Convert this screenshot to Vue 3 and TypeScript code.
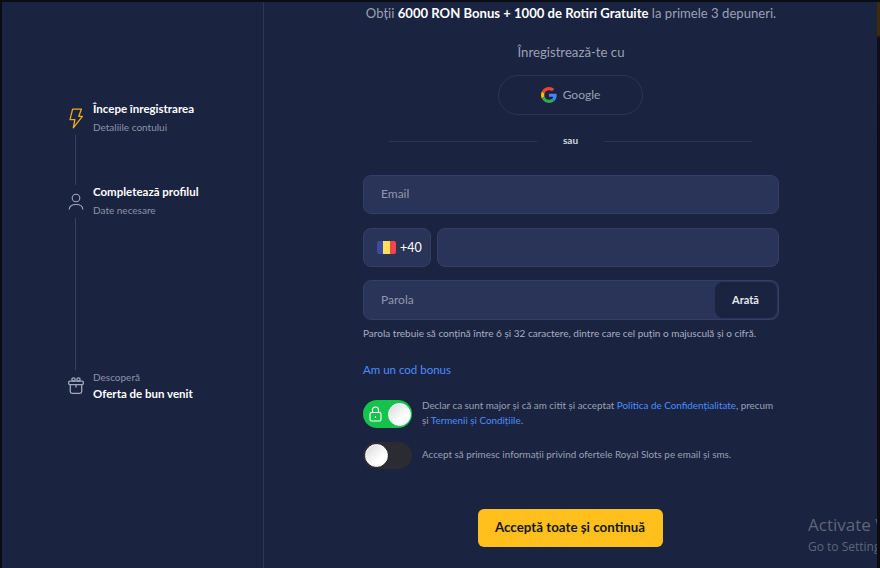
<script setup lang="ts">
type Step = { title: string; sub: string; icon: string; reverse?: boolean }

const steps: Step[] = [
  { title: 'Începe înregistrarea', sub: 'Detaliile contului', icon: 'bolt' },
  { title: 'Completează profilul', sub: 'Date necesare', icon: 'user' },
  { title: 'Oferta de bun venit', sub: 'Descoperă', icon: 'gift', reverse: true },
]
</script>

<template>
  <div class="page">
    <aside class="side">
      <div class="steps">
        <template v-for="(step, i) in steps" :key="step.title">
          <div class="step" :class="{ reverse: step.reverse }">
            <div class="step-icon">
              <svg v-if="step.icon === 'bolt'" width="14" height="21" viewBox="0 0 14 21" fill="none" stroke="#eead1c" stroke-width="1.3" stroke-linejoin="round">
                <path d="M3.600 1.200h8.800L9.800 8.300h3.600L4.300 19.800l1.600-8.200H1z" />
              </svg>
              <svg v-else-if="step.icon === 'user'" width="16" height="17" viewBox="0 0 16 17" fill="none" stroke="#a3a9bb" stroke-width="1.100">
                <circle cx="8" cy="5" r="3.800" />
                <path d="M1.200 16.500c0-3.500 2.800-5 6.800-5s6.800 1.500 6.800 5" />
              </svg>
              <svg v-else width="16" height="17" viewBox="0 0 16 17" fill="none" stroke="#a3a9bb" stroke-width="1.300">
                <circle cx="5.500" cy="2.400" r="1.600" />
                <circle cx="10.500" cy="2.400" r="1.600" />
                <rect x=".7" y="4.100" width="14.600" height="3.500" rx="1" />
                <path d="M2.300 7.600v7c0 1 .6 1.700 1.700 1.700h8c1.100 0 1.700-.7 1.700-1.700v-7M8 7.600v3" />
              </svg>
            </div>
            <div class="step-text">
              <div class="step-title">{{ step.title }}</div>
              <div class="step-sub">{{ step.sub }}</div>
            </div>
          </div>
          <div v-if="i < steps.length - 1" class="step-line" :class="i === 0 ? 'short' : 'long'"></div>
        </template>
      </div>
    </aside>

    <main class="main">
      <div class="form">
        <p class="promo">Obții <b>6000 RON Bonus + 1000 de Rotiri Gratuite</b> la primele 3 depuneri.</p>
        <p class="register">Înregistrează-te cu</p>
        <button class="google">
          <svg width="16" height="16" viewBox="0 0 48 48">
            <path fill="#ea4335" d="M24 9.500c3.500 0 6.700 1.200 9.200 3.600l6.900-6.900C35.900 2.400 30.500 0 24 0 14.600 0 6.500 5.400 2.600 13.200l8 6.200C12.500 13.600 17.800 9.500 24 9.500z" />
            <path fill="#4285f4" d="M47 24.500c0-1.600-.1-3.100-.4-4.500H24v9h12.900c-.6 3-2.300 5.500-4.800 7.200l7.700 6C44.300 38 47 31.800 47 24.500z" />
            <path fill="#fbbc05" d="M10.600 28.600c-.5-1.400-.8-3-.8-4.600s.3-3.200.8-4.600l-8-6.200C1 16.400 0 20.100 0 24s1 7.600 2.600 10.800z" />
            <path fill="#34a853" d="M24 48c6.500 0 11.900-2.100 15.800-5.800l-7.700-6c-2.100 1.400-4.900 2.300-8.100 2.300-6.200 0-11.500-4.100-13.400-9.900l-8 6.200C6.500 42.600 14.600 48 24 48z" />
          </svg>
          <span>Google</span>
        </button>
        <div class="divider"><span>sau</span></div>

        <div class="field email"><span>Email</span></div>
        <div class="phone">
          <div class="field prefix">
            <span class="flag"><i class="blue"></i><i class="yellow"></i><i class="red"></i></span>
            <span>+40</span>
          </div>
          <div class="field number"></div>
        </div>
        <div class="field password">
          <span>Parola</span>
          <button class="show">Arată</button>
        </div>
        <p class="hint">Parola trebuie să conțină între 6 și 32 caractere, dintre care cel puțin o majusculă și o cifră.</p>
        <a class="bonus">Am un cod bonus</a>

        <div class="consent first">
          <div class="toggle on">
            <svg width="13" height="16" viewBox="0 0 13 16" fill="none" stroke="#fff" stroke-width="1.100">
              <rect x="1" y="6.500" width="11" height="8.500" rx="1.500" />
              <path d="M3.500 6.500V4a3 3 0 0 1 6 0v2.500" />
              <path d="M6.500 10v2" />
            </svg>
            <span class="knob"></span>
          </div>
          <p>Declar ca sunt major și că am citit și acceptat <a>Politica de Confidențialitate</a>, precum și <a>Termenii și Condițiile</a>.</p>
        </div>
        <div class="consent second">
          <div class="toggle">
            <span class="knob"></span>
          </div>
          <p>Accept să primesc informații privind ofertele Royal Slots pe email și sms.</p>
        </div>

        <button class="submit">Acceptă toate și continuă</button>
      </div>
    </main>

    <div class="activate">
      <div class="a1">Activate Windows</div>
      <div class="a2">Go to Settings to activate Windows.</div>
    </div>
    <div class="edge"></div>
  </div>
</template>

<style>
html,
body {
  margin: 0;
  background: #1a2340;
  overflow: hidden;
}
</style>

<style scoped>
.page {
  position: relative;
  display: flex;
  width: 880px;
  height: 568px;
  box-sizing: border-box;
  overflow: hidden;
  background: #1a2340;
  border-top: 2px solid #0b0d14;
  border-left: 2px solid #0b0d14;
  font-family: Lato, "Open Sans", sans-serif;
  color: #fff;
}
.side {
  width: 262px;
  flex: none;
  box-sizing: border-box;
  border-right: 1px solid #2c3553;
  padding: 100px 0 0 65px;
}
.steps {
  display: flex;
  flex-direction: column;
}
.step {
  display: flex;
  align-items: center;
  gap: 8px;
  height: 33px;
}
.step-icon {
  width: 18px;
  display: flex;
  justify-content: center;
}
.step-text {
  display: flex;
  flex-direction: column;
  gap: 3.500px;
  margin-top: -2px;
}
.step.reverse .step-text {
  flex-direction: column-reverse;
  gap: 2px;
  margin-top: 0;
}
.step.reverse .step-icon {
  margin-top: -2px;
}
.step-title {
  font-size: 11.500px;
  font-weight: 700;
  line-height: 16px;
  white-space: nowrap;
}
.step-sub {
  font-size: 10px;
  line-height: 13px;
  color: #8d93a8;
}
.step-line {
  width: 1px;
  margin-left: 8px;
  background: #3a4260;
}
.step-line.short {
  height: 50px;
}
.step-line.long {
  height: 152px;
}
.main {
  flex: 1;
  padding-left: 99px;
}
.form {
  width: 416px;
  display: flex;
  flex-direction: column;
}
p {
  margin: 0;
}
.promo {
  margin-top: 2px;
  text-align: center;
  font-size: 13.100px;
  line-height: 18px;
  color: #9ba1b5;
  white-space: nowrap;
}
.promo b {
  color: #fff;
}
.register {
  margin-top: 21px;
  text-align: center;
  font-size: 13.200px;
  line-height: 18px;
  color: #9ba1b5;
}
.google {
  align-self: center;
  margin: 14px 1px 0 0;
  width: 145px;
  height: 40px;
  display: flex;
  align-items: center;
  justify-content: center;
  gap: 6px;
  border: 1px solid #2c3553;
  border-radius: 20px;
  background: transparent;
  color: #9ba1b5;
  font: 12px Lato, sans-serif;
  padding: 0;
}
.google span {
  margin-top: -2px;
}
.divider {
  display: flex;
  align-items: center;
  margin: 19px 27px 0 26px;
  height: 14px;
  font-size: 10px;
  font-weight: 700;
  color: #d4d7e0;
}
.divider::before,
.divider::after {
  content: "";
  flex: 1;
  height: 1px;
  background: #2c3553;
}
.divider span {
  padding: 0 26px;
  margin-top: -2px;
}
.field {
  box-sizing: border-box;
  height: 39px;
  display: flex;
  align-items: center;
  padding-left: 17px;
  background: #2a3458;
  border: 1px solid #363f63;
  border-radius: 8px;
  font-size: 12px;
  color: #9197ac;
}
.email {
  margin-top: 27px;
}
.email span,
.password > span {
  margin-top: -2px;
}
.phone {
  display: flex;
  gap: 6px;
  margin-top: 14px;
}
.prefix {
  width: 68px;
  flex: none;
  gap: 4px;
  padding-left: 13px;
  font-size: 12.500px;
  color: #fff;
}
.number {
  flex: 1;
}
.flag {
  display: flex;
  width: 19px;
  height: 13px;
  border-radius: 2px;
  overflow: hidden;
}
.flag i {
  flex: 1;
}
.flag .blue {
  background: #3d4aa0;
}
.flag .yellow {
  background: #fde15c;
}
.flag .red {
  background: #f0474f;
}
.password {
  margin-top: 13px;
  height: 40px;
  justify-content: space-between;
  padding-right: 1px;
}
.show {
  width: 62px;
  height: 36px;
  border: none;
  border-radius: 8px;
  background: #1a2340;
  color: #e4e6ec;
  font: 700 11px Lato, sans-serif;
  padding: 0 1px 2px 0;
}
.hint {
  margin-top: 5px;
  font-size: 10px;
  line-height: 16px;
  color: #a9aec0;
  white-space: nowrap;
}
.bonus {
  margin-top: 21px;
  font-size: 11.500px;
  line-height: 16px;
  color: #4d8dff;
}
.consent {
  display: flex;
  align-items: center;
  gap: 10px;
  font-size: 9.850px;
  line-height: 15px;
  color: #9ba1b5;
}
.consent p {
  margin-top: -3px;
}
.consent a {
  color: #4d8dff;
}
.consent.first {
  margin-top: 22px;
}
.consent.second {
  margin-top: 14px;
}
.toggle {
  box-sizing: border-box;
  width: 49px;
  height: 27px;
  flex: none;
  display: flex;
  align-items: center;
  padding: 0 2px;
  border-radius: 14px;
  background: #2b2c33;
}
.toggle.on {
  height: 28px;
  background: #15c24c;
  justify-content: space-between;
  padding: 0 1px 0 6px;
}
.knob {
  width: 23px;
  height: 23px;
  border-radius: 50%;
  background: linear-gradient(135deg, #d8d8d8, #fff 65%);
  box-sizing: border-box;
  border: 1px solid #fff;
}
.submit {
  align-self: center;
  margin: 40px 1px 0 0;
  width: 185px;
  height: 38px;
  border: none;
  border-radius: 6px;
  background: #ffc01e;
  color: #14161f;
  font: 700 13.350px Lato, sans-serif;
  padding: 0 1px 3px 0;
}
.activate {
  position: absolute;
  left: 806px;
  top: 512px;
  white-space: nowrap;
  font-family: "Open Sans", sans-serif;
  color: #5f6678;
}
.a1 {
  font-size: 17px;
  line-height: 22px;
}
.a2 {
  margin-top: 3px;
  font-size: 12px;
  line-height: 16px;
}
.edge {
  position: absolute;
  top: 0;
  right: 0;
  bottom: 0;
  width: 3px;
  background: linear-gradient(#3d2c08 0, #3d2c08 33px, #120c14 36px, #0d0a10 100%);
}
</style>
